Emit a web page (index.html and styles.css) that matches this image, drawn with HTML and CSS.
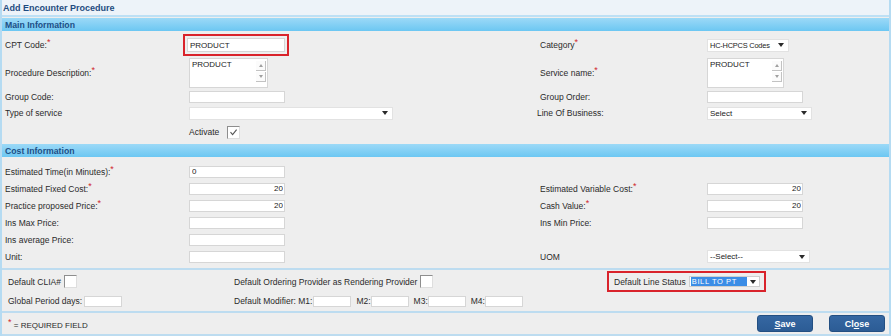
FILE: index.html
```html
<!DOCTYPE html>
<html lang="en">
<head>
    <meta charset="UTF-8">
    <meta name="viewport" content="width=device-width, initial-scale=1.0">
    <title>Add Encounter Procedure</title>
    <link rel="stylesheet" href="styles.css">
</head>
<body>
<div class="page">
    <div class="title">Add Encounter Procedure</div>

    <div class="bar">Main Information</div>
    <div class="form main">
        <div class="row r-cpt">
            <div class="lbl">CPT Code:<span class="req">*</span></div>
            <div><span class="req-box"><input class="field wide" type="text" value="PRODUCT"></span></div>
            <div class="lbl">Category<span class="req">*</span></div>
            <div><div class="select w-cat"><span>HC-HCPCS Codes</span><i class="arrow"></i></div></div>
        </div>
        <div class="row r-desc">
            <div class="lbl">Procedure Description:<span class="req">*</span></div>
            <div>
                <div class="textarea"><span class="ta-text">PRODUCT</span><span class="ta-scroll"><span class="ta-btn"><i class="up"></i></span><span class="ta-btn"><i class="down"></i></span></span></div>
            </div>
            <div class="lbl">Service name:<span class="req">*</span></div>
            <div>
                <div class="textarea narrow"><span class="ta-text">PRODUCT</span><span class="ta-scroll"><span class="ta-btn"><i class="up"></i></span><span class="ta-btn"><i class="down"></i></span></span></div>
            </div>
        </div>
        <div class="row r-17">
            <div class="lbl">Group Code:</div>
            <div><input class="field" type="text"></div>
            <div class="lbl">Group Order:</div>
            <div><input class="field" type="text"></div>
        </div>
        <div class="row r-16">
            <div class="lbl">Type of service</div>
            <div><div class="select w-type"><span></span><i class="arrow"></i></div></div>
            <div class="lbl shift">Line Of Business:</div>
            <div><div class="select w-lob"><span>Select</span><i class="arrow"></i></div></div>
        </div>
        <div class="row r-act">
            <div></div>
            <div class="activate">Activate <span class="check on"><svg width="11" height="11" viewBox="0 0 11 11"><path d="M2.5 5.2 L4.6 7.6 L8.6 2.6" fill="none" stroke="#555" stroke-width="1.1"/></svg></span></div>
            <div></div>
            <div></div>
        </div>
    </div>

    <div class="bar">Cost Information</div>
    <div class="form cost">
        <div class="row r-17">
            <div class="lbl">Estimated Time(in Minutes):<span class="req">*</span></div>
            <div><input class="field" type="text" value="0"></div>
            <div></div>
            <div></div>
        </div>
        <div class="row r-17">
            <div class="lbl">Estimated Fixed Cost:<span class="req">*</span></div>
            <div><input class="field num" type="text" value="20"></div>
            <div class="lbl">Estimated Variable Cost:<span class="req">*</span></div>
            <div><input class="field num" type="text" value="20"></div>
        </div>
        <div class="row r-17">
            <div class="lbl">Practice proposed Price:<span class="req">*</span></div>
            <div><input class="field num" type="text" value="20"></div>
            <div class="lbl">Cash Value:<span class="req">*</span></div>
            <div><input class="field num" type="text" value="20"></div>
        </div>
        <div class="row r-17">
            <div class="lbl">Ins Max Price:</div>
            <div><input class="field" type="text"></div>
            <div class="lbl">Ins Min Price:</div>
            <div><input class="field" type="text"></div>
        </div>
        <div class="row r-17">
            <div class="lbl">Ins average Price:</div>
            <div><input class="field" type="text"></div>
            <div></div>
            <div></div>
        </div>
        <div class="row r-17">
            <div class="lbl">Unit:</div>
            <div><input class="field" type="text"></div>
            <div class="lbl">UOM</div>
            <div><div class="select w-uom"><span>--Select--</span><i class="arrow"></i></div></div>
        </div>
    </div>

    <div class="defaults">
        <div class="def-row def-a">
            <div class="grp">Default CLIA# <span class="check"></span></div>
            <div class="grp">Default Ordering Provider as Rendering Provider <span class="check"></span></div>
            <div class="grp">
                <span class="status-box">Default Line Status
                    <span class="select w-status"><span class="picked">BILL TO PT</span><i class="arrow"></i></span>
                </span>
            </div>
        </div>
        <div class="def-row def-b">
            <div class="grp">Global Period days: <input class="field small g-days" type="text"></div>
            <div class="grp mods">
                Default Modifier: M1:<input class="field small first" type="text">
                <span class="m">M2:</span><input class="field small" type="text">
                <span class="m">M3:</span><input class="field small" type="text">
                <span class="m">M4:</span><input class="field small" type="text">
            </div>
            <div></div>
        </div>
    </div>

    <div class="footer">
        <div class="legend"><span class="req">*</span> = REQUIRED FIELD</div>
        <div class="buttons">
            <button class="btn"><u>S</u>ave</button>
            <button class="btn">Cl<u>o</u>se</button>
        </div>
    </div>
</div>
</body>
</html>
```

FILE: styles.css
```css
body {
    margin: 0;
    font-family: "Liberation Sans", Arial, sans-serif;
    font-size: 8.5px;
    color: #2a2a2a;
    background: #eeeeee;
}
.page {
    width: 891px;
    height: 336px;
    box-sizing: border-box;
    border-left: 2px solid #b5dbf2;
    border-right: 2px solid #b5dbf2;
    background: #eeeeee;
}
.title {
    height: 15px;
    line-height: 17px;
    padding-left: 1px;
    background: #edf3f9;
    border-bottom: 2px solid #bde0f5;
    font-size: 9px;
    font-weight: bold;
    color: #1f4c80;
}
.bar {
    height: 13px;
    line-height: 14px;
    margin-top: 1px;
    padding-left: 3px;
    background: linear-gradient(#9cd9f7, #6cc7f2);
    font-size: 8.7px;
    font-weight: bold;
    color: #1d4f86;
}
.form {
    padding-left: 3px;
}
.main {
    padding-top: 2px;
}
.cost {
    padding-top: 6px;
    padding-bottom: 3px;
}
.row {
    display: grid;
    grid-template-columns: 184px 351px 167px 1fr;
    align-items: center;
}
.r-cpt { height: 24px; }
.r-desc { height: 31px; }
.r-17 { height: 17px; }
.r-16 { height: 16px; }
.r-act { height: 22px; }
.lbl {
    white-space: nowrap;
}
.shift {
    margin-left: -3px;
}
.req {
    color: #d0262c;
    font-size: 9px;
    vertical-align: 3px;
    line-height: 0;
}

/* inputs */
.field {
    display: block;
    width: 96px;
    height: 12px;
    box-sizing: border-box;
    margin: 0;
    padding: 0 2px;
    border: 1px solid #d6d6d6;
    background: #fff;
    font-family: inherit;
    font-size: 8px;
    color: #222;
    outline: none;
}
.field.num {
    text-align: right;
    padding-right: 1px;
}
.field.wide {
    width: 98px;
    height: 14px;
}
.field.small {
    display: inline-block;
    width: 38px;
    height: 11px;
    vertical-align: middle;
}
.req-box {
    display: inline-block;
    margin-left: -6px;
    padding: 2px;
    border: 2px solid #d9232b;
    vertical-align: middle;
}

/* textarea look */
.textarea {
    display: flex;
    justify-content: space-between;
    width: 79px;
    height: 30px;
    box-sizing: border-box;
    border: 1px solid #d6d6d6;
    background: #fff;
}
.textarea.narrow {
    width: 77px;
}
.ta-text {
    padding: 1px 2px;
    font-size: 8px;
    color: #222;
}
.ta-scroll {
    display: flex;
    flex-direction: column;
    gap: 1px;
    padding: 2px 1px 0 0;
}
.ta-btn {
    display: flex;
    align-items: center;
    justify-content: center;
    width: 10px;
    height: 10px;
    box-sizing: border-box;
    border-right: 1px solid #c2c2c2;
    border-bottom: 1px solid #c2c2c2;
    background: #fbfbfb;
}
.ta-btn i {
    width: 0;
    height: 0;
    border-left: 2.5px solid transparent;
    border-right: 2.5px solid transparent;
}
.ta-btn .up { border-bottom: 3px solid #a0a0a0; }
.ta-btn .down { border-top: 3px solid #a0a0a0; }

/* select look */
.select {
    display: flex;
    align-items: center;
    justify-content: space-between;
    height: 13px;
    box-sizing: border-box;
    padding: 0 4px 0 2px;
    border: 1px solid #e2e2e2;
    background: #fff;
    font-size: 8px;
    color: #222;
}
.arrow {
    flex: none;
    width: 0;
    height: 0;
    border-left: 3.5px solid transparent;
    border-right: 3.5px solid transparent;
    border-top: 4px solid #2a2a2a;
}
.w-cat {
    width: 82px;
    font-size: 7.4px;
    letter-spacing: -0.2px;
}
.w-type { width: 204px; }
.w-lob { width: 105px; }
.w-uom { width: 103px; }

/* checkbox look */
.check {
    display: inline-block;
    width: 13px;
    height: 13px;
    box-sizing: border-box;
    border: 1px solid;
    border-color: #8e8e8e #dedede #dedede #8e8e8e;
    background: #fff;
    vertical-align: middle;
}
.check svg {
    display: block;
}
.activate {
    display: flex;
    align-items: center;
    gap: 8px;
}

/* defaults */
.defaults {
    border-top: 2px solid #bddcf0;
    padding: 0 0 2px 6px;
}
.def-row {
    display: grid;
    grid-template-columns: 226px 373px 1fr;
    align-items: center;
}
.def-a { height: 23px; }
.def-b { height: 16px; }
.grp {
    display: flex;
    align-items: center;
    gap: 3px;
    white-space: nowrap;
}
.g-days {
    margin-left: -1px;
    width: 40px;
}
.mods {
    gap: 0;
}
.mods .first {
    margin-left: 1px;
}
.mods .m {
    margin-left: 5px;
}
.status-box {
    display: flex;
    align-items: center;
    gap: 3px;
    width: 159px;
    height: 21px;
    box-sizing: border-box;
    padding-left: 5px;
    border: 2px solid #d9232b;
}
.w-status {
    width: 71px;
    height: 11px;
    padding: 0 3px 0 1px;
    border-color: #cfcfcf;
}
.picked {
    display: inline-block;
    width: 55px;
    padding-left: 1px;
    line-height: 9px;
    background: #3b8de6;
    color: #fff;
    font-size: 7.5px;
    letter-spacing: 0.6px;
}

/* footer */
.footer {
    display: flex;
    align-items: center;
    justify-content: space-between;
    height: 21px;
    padding: 0 4px 0 6px;
    border-top: 2px solid #bddcf0;
    border-bottom: 2px solid #bddcf0;
}
.legend {
    padding-top: 3px;
    font-size: 8px;
}
.buttons {
    display: flex;
    gap: 16px;
}
.btn {
    width: 56px;
    height: 17px;
    padding: 0;
    border: 1px solid #234f82;
    border-radius: 3px;
    background: linear-gradient(#3567a2, #2c5c95);
    color: #fff;
    font-family: inherit;
    font-size: 9px;
    font-weight: bold;
}
```
